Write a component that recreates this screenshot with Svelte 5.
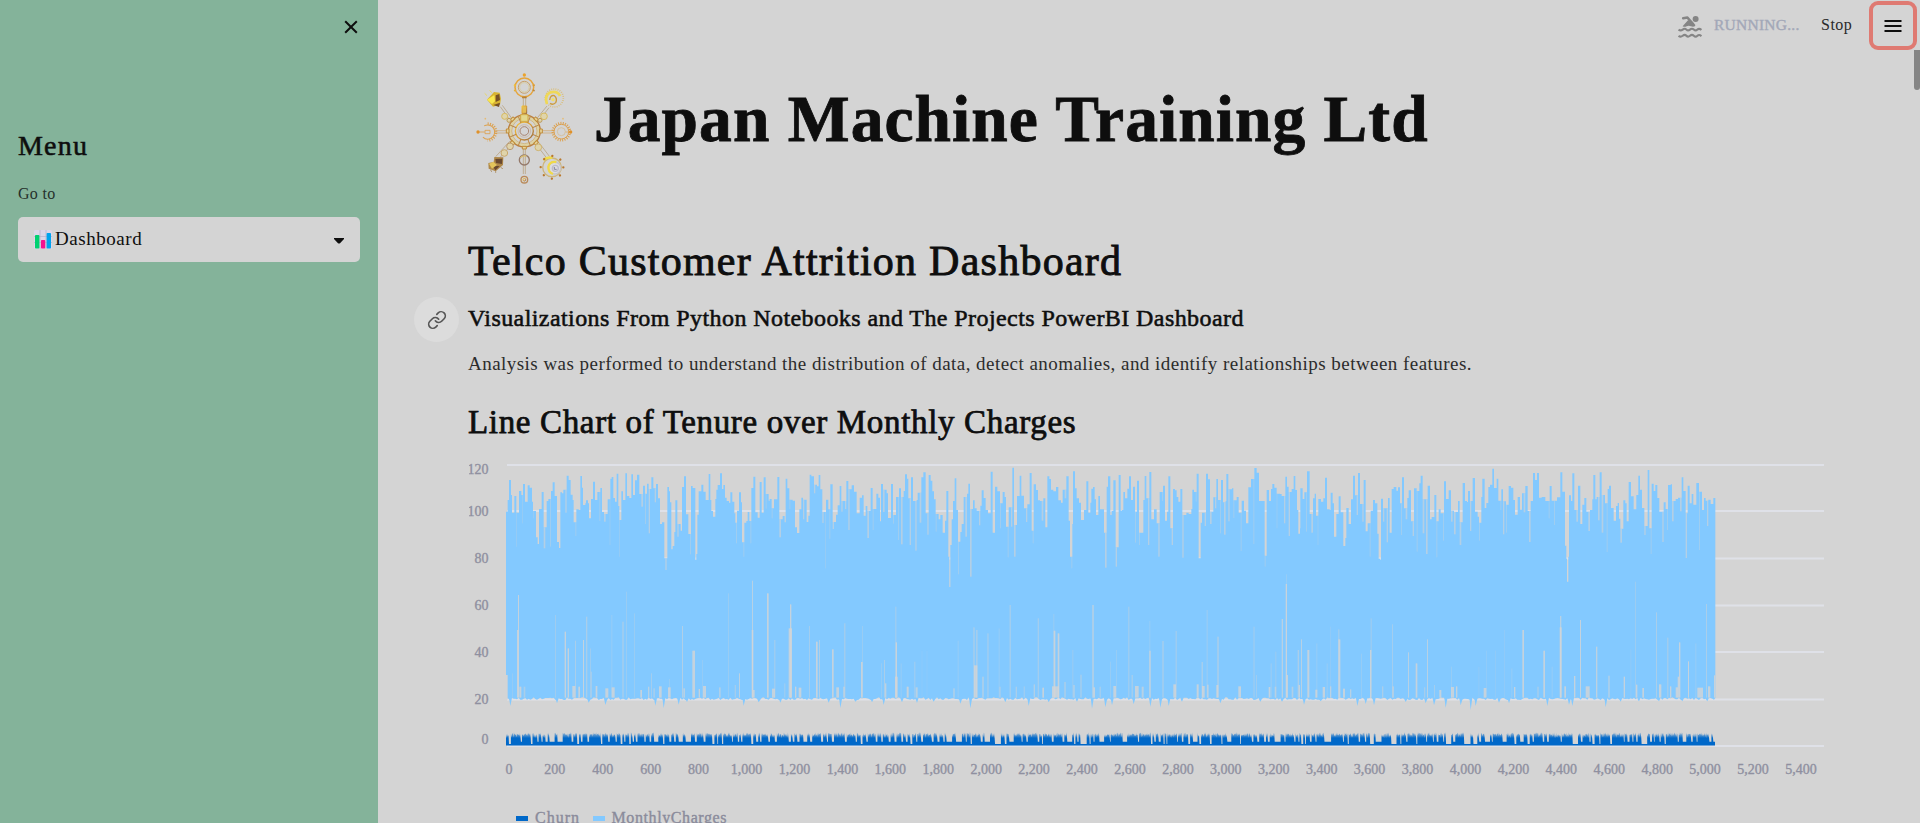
<script>
  // Chart geometry is kept in thirds of a pixel, one origin per panel.
  const panels = [
    {
      origin: 1380, end: 1260, start: 138,
      tops: '138,185 143,150 147,90 153,135 156,188 163,138 169,290 171,188 177,123 184,135 187,220 189,102 195,155 203,106 209,113 216,155 219,205 221,183 228,262 233,282 237,177 245,126 251,295 256,232 260,153 265,147 270,290 273,123 278,97 284,138 291,276 297,294 301,127 306,130 310,119 316,188 320,77 326,90 332,134 338,150 341,217 346,258 349,178 356,180 361,78 366,113 369,165 376,160 378,151 384,160 387,205 393,147 399,95 405,150 412,126 418,213 421,114 426,186 432,215 437,192 443,148 449,285 451,86 455,81 460,144 465,155 470,71 475,168 478,320 480,210 484,124 489,150 496,70 501,138 508,144 514,73 519,135 525,91 531,74 538,132 544,170 549,107 555,222 558,131 561,101 566,250 570,117 574,82 580,115 584,157 588,102 594,145 600,222 606,217 613,325 616,360 620,325 622,111 627,124 630,157 634,298 638,288 643,246 646,151 652,260 656,222 662,242 666,111 672,79 678,193 685,252 690,313 693,108 698,114 706,330 709,312 712,194 716,124 724,104 730,125 737,150 746,72 751,150 754,183 759,200 766,147 769,119 773,105 780,70 786,117 790,105 795,143 800,153 807,158 811,127 817,155 823,190 826,218 828,280 831,182 837,127 843,157 846,277 850,320 853,218 859,213 863,186 868,213 871,280 874,114 880,80 886,187 893,203 899,96 905,188 911,82 917,176 920,132 926,152 929,147 935,205 938,175 942,148 952,81 958,262 963,208 968,198 974,217 977,86 982,115 988,177 991,149 998,152 1005,232 1011,249 1018,178 1024,143 1029,208 1033,149 1040,216 1045,197 1049,74 1054,79 1062,130 1066,104 1071,109 1076,75 1081,118 1087,219 1091,186 1096,355 1098,149 1105,178 1108,266 1111,103 1118,237 1122,216 1128,194 1133,166 1139,108 1144,185 1148,153 1155,177 1159,93 1165,240 1169,118 1175,106 1182,125 1190,190 1194,190 1199,143 1206,136 1211,197 1217,168 1222,264 1227,182 1232,114 1238,240 1241,177 1249,131 1255,143',
      gaps: '171,540,4,1 174,435,3,1 157,670,2,.4 178,710,6,1 191,710,5,.6 285,495,3,.45 314,545,4,1 323,595,4,1 337,708,9,1 345,572,3,.6 355,710,5,1 369,570,3,1 378,500,4,.6 390,595,3,.4 392,665,4,.5 407,708,5,1 436,715,9,1 454,495,3,.3 455,712,9,1 487,515,4,.6 498,425,3,.35 522,490,3,.35 541,720,5,1 564,710,4,.8 573,670,3,.5 580,715,5,.5 597,709,8,1 624,712,8,1 627,687,3,.3 666,528,3,.7 670,715,5,.8 697,602,8,1 716,717,4,1 727,630,2,.4 729,708,9,1 804,430,3,.35 777,712,5,.7 824,705,4,.5 837,670,3,.9 876,392,3,.8 875,540,5,1 878,720,6,1 921,430,5,1 943,570,3,.6 936,716,9,1 973,700,3,.5 990,463,4,1 986,535,10,1 1005,710,4,1 1016,713,8,1 1047,528,3,.5 1068,575,5,1 1077,570,3,.7 1116,598,5,1 1129,712,8,1 1153,520,3,.7 1150,710,4,1 1203,636,5,1 1206,528,3,.35',
      drops: '152,768 290,760 388,758 435,765 586,767 610,775 655,764 682,756 849,767 895,757 960,758 1104,758 1143,774 1184,755 1238,757'
    },
    {
      origin: 2640, end: 1260, start: 0,
      tops: '0,214 3,102 9,186 14,119 20,130 24,204 33,102 39,221 42,195 48,141 54,270 57,115 63,283 68,141 71,123 75,73 81,86 85,145 89,285 93,82 99,153 106,302 110,150 113,128 119,218 124,82 130,67 137,190 142,254 146,75 152,92 157,124 162,148 167,245 170,192 176,208 181,195 188,248 195,212 199,123 205,320 208,411 211,285 215,208 219,153 224,85 229,180 234,373 237,275 241,246 245,222 251,141 256,260 261,131 265,101 270,380 275,177 279,151 284,175 290,182 297,226 301,167 305,121 311,144 317,180 324,190 332,65 338,248 345,110 352,124 360,235 363,160 368,126 374,141 378,230 383,322 386,172 393,230 397,53 402,320 407,225 411,138 419,77 424,137 432,175 438,216 442,163 449,69 455,242 458,280 461,103 468,120 474,151 480,153 485,212 490,145 496,232 502,79 508,87 513,119 520,124 528,111 535,151 543,158 548,119 554,145 559,79 566,212 570,320 574,355 577,222 579,64 585,115 590,145 597,158 603,210 612,180 619,94 625,188 631,158 634,116 639,111 644,148 648,195 655,138 660,178 672,248 675,353 680,110 684,79 691,195 695,183 700,91 707,350 711,292 716,75 722,182 726,180 730,126 735,145 742,116 747,79 753,150 759,110 765,278 768,185 771,92 777,285 780,248 790,150 794,78 799,145 804,285 808,66 814,208 822,178 830,220 835,320 839,126 846,153 849,107 855,212 861,185 865,79 871,235 875,285 879,117 885,121 890,141 895,155 901,117 907,323 911,195 919,188 926,192 934,177 937,119 942,126 947,155 950,71 956,325 962,218 966,188 974,228 978,71 984,88 990,222 995,185 1000,142 1005,175 1009,87 1014,150 1020,250 1023,90 1029,157 1032,254 1037,153 1039,72 1045,214 1049,118 1056,115 1060,204 1063,151 1070,141 1076,188 1082,303 1085,152 1092,182 1098,220 1105,112 1113,87 1120,282 1123,54 1130,68 1137,153 1154,350 1157,317 1160,120 1167,153 1173,117 1177,102 1183,113 1190,235 1192,131 1200,132 1205,138 1212,220 1216,80 1221,110 1226,258 1230,126 1235,117 1241,78 1246,120 1251,180 1255,251',
      gaps: '3,640,3,.3 12,630,3,.6 15,700,4,.9 46,470,3,.55 47,577,4,1 45,680,8,1 62,640,3,.3 80,710,6,1 103,635,3,.5 107,712,6,.8 125,602,2,.2 140,602,2,.2 220,715,4,.8 233,572,3,.3 280,532,4,.6 288,540,5,.5 282,646,10,1 307,680,4,.8 322,550,4,.5 356,535,3,.3 358,710,4,.6 389,465,3,.7 407,710,4,.6 431,709,4,.4 461,703,4,.7 473,505,4,.5 487,713,5,1 520,492,3,.35 521,542,5,1 516,709,21,1 533,550,5,1 553,696,4,.7 577,600,3,.4 580,705,4,.8 601,674,4,.6 637,465,4,.9 640,712,5,1 659,710,3,.7 690,635,3,.3 700,708,8,1 708,600,3,.3 745,470,3,.6 755,675,3,.7 765,708,11,1 785,710,6,.8 808,513,3,.3 808,602,4,1 847,573,4,.6 887,543,3,.6 880,703,8,1 950,703,6,1 965,636,3,.8 966,708,8,1 980,480,3,.4 981,704,5,.8 1012,560,4,.7 1009,705,6,1 1075,709,8,1 1120,530,4,.4 1128,675,3,.4 1172,640,3,.4 1166,711,5,1 1186,605,3,.4 1184,710,5,.7 1205,507,4,.8 1218,373,3,.3 1217,402,4,1 1219,675,5,1 1235,710,5,.7 1253,600,4,.6 1256,705,4,1',
      drops: '12,765 66,757 110,759 160,755 243,761 271,775 376,757 448,768 506,757 590,755 636,776 676,772 696,766 759,763 813,770 839,773 864,768 906,755 1020,760 1140,755 1206,755'
    },
    {
      origin: 3900, end: 1246, start: 0,
      tops: '0,235 1,115 8,147 13,127 18,245 21,64 29,192 34,248 39,145 44,131 48,197 53,285 55,147 63,155 70,145 75,83 81,178 89,180 92,128 98,160 102,260 109,192 116,139 122,187 130,288 136,264 139,174 146,222 153,148 159,77 165,136 170,195 174,69 180,162 187,215 191,90 197,244 203,220 209,320 212,182 219,150 225,160 232,251 236,326 241,330 243,146 249,215 253,175 260,277 264,144 269,248 275,117 281,111 289,122 294,112 300,160 303,255 306,82 312,175 317,208 322,144 326,121 333,214 338,258 342,115 350,305 353,123 358,100 362,77 368,250 373,148 378,312 383,107 390,208 395,201 403,135 409,322 412,214 416,178 422,190 429,272 432,94 438,147 446,121 453,215 458,182 462,253 467,186 474,153 479,285 484,217 488,99 495,153 501,156 504,123 510,243 514,153 518,84 525,185 533,200 537,272 540,218 544,141 547,86 554,174 559,159 565,111 570,104 577,56 582,114 590,86 595,152 601,180 604,118 609,253 613,154 618,248 621,164 626,108 633,113 640,150 645,194 653,141 660,179 666,130 671,187 676,108 683,183 687,276 692,153 699,69 705,90 711,69 717,143 725,141 736,153 746,205 749,108 755,152 762,225 765,152 771,142 781,67 787,125 795,287 799,326 801,395 805,320 807,136 813,153 817,70 823,180 829,215 834,107 841,222 847,164 853,144 859,185 865,243 870,180 877,148 880,75 886,148 890,141 894,211 899,67 905,248 910,135 915,160 920,306 923,117 927,107 933,174 941,212 948,168 953,159 957,206 961,278 966,236 970,151 976,160 980,214 986,96 993,139 1001,178 1009,135 1015,77 1020,119 1026,174 1033,255 1037,228 1043,60 1048,235 1052,312 1055,101 1061,123 1066,105 1072,144 1078,185 1087,276 1091,157 1097,177 1101,240 1104,105 1112,103 1116,214 1121,153 1127,147 1134,143 1140,184 1145,82 1150,123 1157,324 1161,190 1163,107 1169,160 1175,132 1180,164 1189,99 1197,300 1200,125 1206,180 1212,144 1217,152 1221,228 1225,149 1232,162 1240,144',
      gaps: '3,568,3,.8 22,600,6,1 49,580,3,.3 46,719,6,1 68,711,7,1 80,640,3,.3 90,530,3,.2 90,709,4,.8 115,538,3,.6 115,568,6,1 129,716,6,1 150,718,4,.8 183,611,3,.3 212,505,3,.5 210,600,4,1 246,709,4,.6 276,523,3,.5 277,709,5,.7 324,607,3,.8 347,640,5,1 372,712,4,.5 381,568,3,.8 402,705,3,.5 418,720,6,1 453,650,3,.3 453,711,9,1 468,709,4,1 535,650,3,.2 551,714,8,1 559,602,2,.3 585,602,2,.3 612,540,3,.2 634,655,3,.3 642,711,4,1 667,540,5,1 712,710,4,.6 730,602,5,1 755,650,3,.3 780,498,4,.8 779,532,6,1 793,709,5,1 822,678,4,1 840,510,3,1 888,590,4,.9 857,709,12,1 925,677,4,.8 971,680,4,1 991,598,3,.2 1006,395,2,.6 1008,704,4,1 1027,714,5,1 1068,487,3,.6 1077,703,7,1 1102,563,3,.7 1110,709,4,1 1137,577,4,1 1133,680,5,1 1127,712,7,1 1164,634,3,1 1186,580,3,.3 1192,713,17,1 1218,462,3,.6 1224,709,7,1 1242,676,4,1',
      drops: '12,764 62,754 172,768 198,762 223,766 319,756 378,760 403,766 438,773 484,766 510,780 528,768 599,758 628,760 744,768 805,764 817,768 917,772 963,755 1019,754 1078,754 1145,754 1224,754'
    }
  ];

  const rows = (s) => s.split(' ').map((t) => t.split(',').map(Number));

  let seed = 71;
  const rnd = () => ((seed = (seed * 16807) % 2147483647) / 2147483647);

  const areas = panels.map((p) => {
    const tops = rows(p.tops);
    const notches = [];
    let d = `M${p.start} 748`;
    tops.forEach(([x, y], i) => {
      const nx = i < tops.length - 1 ? tops[i + 1][0] : p.end;
      let ty = y;
      // Hairline valleys are drawn as faint notches instead of full cuts.
      if (i > 0 && i < tops.length - 1 && nx - x <= 5) {
        const rim = Math.max(tops[i - 1][1], tops[i + 1][1]);
        if (y > rim + 20 && y < 390) {
          ty = rim;
          notches.push([x, rim, nx - x, y - rim, nx - x <= 3 ? 0.35 : 0.6]);
        }
      }
      d += `L${x} ${ty}L${nx} ${ty}`;
    });
    d += `L${p.end} 744`;
    const drops = rows(p.drops);
    for (let x = p.end - 4; x > p.start; x -= 5) {
      const drop = drops.find((q) => Math.abs(q[0] - x) <= 2.5);
      d += `L${x} ${drop ? drop[1] : Math.round(742 + rnd() * 8)}`;
      if (drop) d += `L${x - 3} 750`;
    }
    return { origin: p.origin, d: d + 'Z', gaps: rows(p.gaps), notches };
  });

  // Churn flips between 0 and 1, so it reads as a dense comb with short lulls.
  let comb = 'M506 745.5';
  let x = 506;
  while (x < 1714) {
    const w = rnd() < 0.3 ? 4 + rnd() * 8 : 1.2 + rnd() * 3;
    for (let k = 0; k < w && x < 1714; k += 1, x += 1) {
      comb += `L${x} ${(732 + rnd() * 3).toFixed(1)}L${x + 0.6} ${(733 + rnd() * 5).toFixed(1)}`;
    }
    const g = rnd() < 0.17 ? 3 + rnd() * 4 : 0.6 + rnd() * 1.5;
    const floor = rnd() < 0.25 ? 744 : 741.8;
    const end = Math.min(x + g, 1715);
    comb += `L${x} ${floor}L${end.toFixed(1)} ${floor}`;
    x = end;
  }
  comb += 'L1715 745.5Z';

  const grid = [465, 511, 558.5, 605.5, 652, 699.5, 746];
  const yTicks = [[120, 474], [100, 516], [80, 563], [60, 609.5], [40, 656.5], [20, 703.5], [0, 743.5]];
  const xTicks = Array.from({ length: 28 }, (_, i) => ({
    label: (i * 200).toLocaleString('en-US'),
    x: i === 0 ? 509 : 554.8 + (i - 1) * 47.93
  }));

  const spokes = [0, 45, 90, 135, 180, 225, 270, 315];
</script>

<div class="app">
  <aside>
    <div class="close">
      <svg width="14" height="14" viewBox="0 0 14 14"><path d="M1.2 1.2 12.8 12.8M12.8 1.2 1.2 12.8" /></svg>
    </div>
    <h3 class="menu">Menu</h3>
    <div class="goto">Go to</div>
    <div class="select">
      <svg class="bars" width="18" height="19" viewBox="0 0 18 19">
        <rect width="18" height="19" rx="1.5" fill="#ddd6e8" />
        <path d="M0 6.5H18M0 12.5H18M6 0V19M12 0V19" stroke="#bcb4cd" stroke-width=".8" />
        <rect x="1" y="5" width="4.4" height="13.5" rx=".8" fill="#00d070" />
        <rect x="7" y="10" width="4.2" height="8.5" rx=".8" fill="#f5128f" />
        <rect x="12.6" y="3" width="4.4" height="15.5" rx=".8" fill="#00a3ee" />
      </svg>
      <span class="value">Dashboard</span>
      <svg class="caret" width="10" height="6" viewBox="0 0 10 6"><path d="M0 0H10V1L6 5.2Q5 6 4 5.2L0 1Z" /></svg>
    </div>
  </aside>

  <main>
    <header>
      <svg class="swim" width="24" height="24" viewBox="0 0 24 24">
        <circle cx="17.6" cy="3.9" r="3" fill="#858585" />
        <path d="M5.2 3.3 9.4 2.5 15 9.2" fill="none" stroke="#858585" stroke-width="2.6" stroke-linecap="round" stroke-linejoin="round" />
        <path d="M10 5.2 4.6 11.2Q6.6 12.2 8.6 11.2 10.8 10.2 13 11.3 15.4 12.3 17.2 11V9.8L13.6 6Z" fill="#858585" />
        <path d="M.6 14.6Q2.6 16.3 4.7 14.6T8.4 14.6 12 14.6 15.8 14.6 19.4 14.6 23.4 14.9M.6 20.8Q2.6 22.5 4.7 20.8T8.4 20.8 12 20.8 15.8 20.8 19.4 20.8 23.4 21.1" fill="none" stroke="#858585" stroke-width="2.1" />
      </svg>
      <span class="running">RUNNING...</span>
      <span class="stop">Stop</span>
      <div class="burger">
        <svg width="18" height="12" viewBox="0 0 18 12"><path d="M.5 1H17.5M.5 6H17.5M.5 11H17.5" /></svg>
      </div>
      <div class="thumb"></div>
    </header>

    <section class="content">
      <div class="brand">
        <svg class="logo" width="112" height="118" viewBox="40 30 336 354">
          <defs>
            <linearGradient id="gold" x1="0" y1="0" x2="1" y2="1">
              <stop offset="0" stop-color="#f2c53d" />
              <stop offset=".5" stop-color="#d99b35" />
              <stop offset="1" stop-color="#94683f" />
            </linearGradient>
          </defs>
          <g fill="none" stroke="url(#gold)" stroke-width="4">
            <!-- arms -->
            <path d="M191 165V112M198 165V112M191 260V342M197 260V342M151 181 122 140M157 176 128 136M231 176 262 138M238 182 268 143M150 244 108 290M158 252 116 298M230 254 264 298M238 248 270 290" stroke-width="2" stroke="#b39a70" />
            <path d="M142 212H106M142 219H106M248 212H284M248 219H284" stroke-width="2" stroke="#cfa468" />
            <!-- hub -->
            <circle cx="194" cy="213" r="43" stroke="#ded3a4" stroke-width="8" />
            <circle cx="194" cy="213" r="48" stroke-width="4" stroke="#bb8040" />
            <circle cx="194" cy="213" r="38" stroke="#d0a95c" stroke-width="2" />
            <circle cx="194" cy="213" r="27" stroke-width="4" />
            <circle cx="194" cy="213" r="19" stroke="#cbbcae" stroke-width="3" />
            <circle cx="194" cy="213" r="13" stroke="#a88572" stroke-width="3" />
            {#each spokes as a}
              <path d="M194 167V187" transform="rotate({a + 22.5} 194 213)" stroke="#b98545" stroke-width="3" />
              <path d="M188 159H200V167H188Z" transform="rotate({a} 194 213)" stroke="#bf8c3a" fill="#e7d49a" stroke-width="3" />
            {/each}
            <path d="M187 138H201V160H187Z" fill="#e3bd54" stroke-width="3" />
            <path d="M183 164H205V184H183Z" fill="#e3d98e" stroke="#d0a643" stroke-width="3" />
            <!-- top ring -->
            <circle cx="194" cy="82" r="28" stroke-width="4.5" stroke="#e5a43b" />
            <circle cx="194" cy="82" r="18" stroke="#c9a06b" stroke-width="3" />
            <circle cx="194" cy="82" r="14" stroke="#d9ca8d" stroke-width="2" />
            <circle cx="194" cy="45" r="5" fill="#eaa32d" stroke="none" />
            <path d="M163 74 168 77M225 74 220 77M163 92 169 90M225 92 219 90M187 112H201" stroke-width="5" />
            <!-- toothed rings -->
            <g stroke="#dca04d">
              <path d="M84 191A25 25 0 0 1 84 241" stroke-dasharray="3 4" stroke-width="8" />
              <circle cx="84" cy="216" r="21" stroke-width="3" stroke-dasharray="92 40" transform="rotate(-120 84 216)" />
              <path d="M76 211H91V221H76ZM58 216H75" stroke-width="2.5" />
              <circle cx="305" cy="215" r="26" stroke-dasharray="3 4" stroke-width="7" />
              <circle cx="305" cy="215" r="22" stroke-width="3" />
              <circle cx="305" cy="215" r="12" stroke="#d5bd94" stroke-width="2.5" />
              <path d="M318 216H332" stroke-width="2" />
            </g>
            <circle cx="55" cy="216" r="5" fill="#df912a" stroke="none" />
            <circle cx="333" cy="216" r="5" fill="#df912a" stroke="none" />
            <circle cx="284" cy="114" r="27" stroke-dasharray="2.5 4" stroke-width="5" stroke="#d9bd78" />
            <path d="M262 132Q253 105 273 97 294 92 301 108" stroke="#efd858" stroke-width="8" />
            <path d="M270 120Q272 104 284 107 294 115 288 128 281 136 271 130" stroke="#cd9c3c" stroke-width="4" />
            <circle cx="280" cy="119" r="5" fill="#f1df68" stroke="none" />
            <!-- lower ring -->
            <circle cx="194" cy="300" r="15" stroke="#94796a" stroke-width="4" />
            <path d="M182 294Q188 285 200 288" stroke="#d9bd73" stroke-width="4" />
            <circle cx="194" cy="359" r="10" stroke="#b98a5a" stroke-width="4" />
            <circle cx="194" cy="359" r="4" stroke-width="3" />
            <path d="M194 371V378" />
            <circle cx="277" cy="322" r="28" stroke="#cdb67c" stroke-width="4" />
            <path d="M251 300Q264 289 278 294" stroke="#f0dc48" stroke-width="7" />
            <circle cx="285" cy="324" r="18" fill="#dcdbe0" stroke="#c5c4cb" stroke-width="4" />
            <path d="M290 306Q270 303 266 320 265 337 280 342" stroke="#f0d948" stroke-width="7" />
            <circle cx="287" cy="325" r="9" stroke="#bdbcc8" stroke-width="4" />
            <path d="M284 321V328H291" stroke="#85859b" stroke-width="3" />
            <circle cx="277" cy="322" r="34" stroke="#b9782e" stroke-width="7" stroke-linecap="round" stroke-dasharray=".1 26.6" />
            <!-- joints -->
            <g fill="#dfd4ab" stroke-width="3">
              <circle cx="135" cy="169" r="9" stroke="#d8bb5e" /><circle cx="148" cy="181" r="6" stroke="#bc9959" />
              <circle cx="253" cy="169" r="10" stroke="#d8bb5e" /><circle cx="241" cy="181" r="6" stroke="#bc9959" />
              <circle cx="151" cy="259" r="10" stroke="#b99970" /><circle cx="134" cy="279" r="10" stroke="#c9a96d" />
              <circle cx="236" cy="262" r="10" stroke="#cfb470" />
            </g>
          </g>
          <path d="M82 119 103 96 120 98 124 116 121 134 100 140Z" fill="#d8b331" />
          <path d="M82 119 104 105 106 124 97 132Z" fill="#f8e84f" />
          <path d="M108 106 119 102 121 120 108 126ZM101 135 121 128 118 141Z" fill="#765026" />
          <path d="M75 100 82 107M90 91 96 98" stroke="#e8d766" stroke-width="3" />
          <path d="M104 291 131 292 130 315 108 334 87 326 86 309 102 306Z" fill="#ae8748" />
          <path d="M107 297 128 296 127 312 109 309ZM98 316 120 319 107 331Z" fill="#69492f" />
          <path d="M88 311 101 305 112 315 97 326Z" fill="#e3c55b" />
          <path d="M92 330 97 335M124 322 129 327M108 334V338" stroke="#a48150" stroke-width="3" />
          <circle cx="77" cy="176" r="2.5" fill="#e5bb73" /><circle cx="310" cy="176" r="2.5" fill="#e5bb73" />
        </svg>
        <h1>Japan Machine Training Ltd</h1>
      </div>

      <h2>Telco Customer Attrition Dashboard</h2>
      <div class="sub">
        <span class="anchor">
          <svg width="20" height="20" viewBox="0 0 24 24"><path d="M10 13a5 5 0 0 0 7.54.54l3-3a5 5 0 0 0-7.07-7.07l-1.72 1.71M14 11a5 5 0 0 0-7.54-.54l-3 3a5 5 0 0 0 7.07 7.07l1.71-1.71" /></svg>
        </span>
        <h3>Visualizations From Python Notebooks and The Projects PowerBI Dashboard</h3>
      </div>
      <p>Analysis was performed to understand the distribution of data, detect anomalies, and identify relationships between features.</p>
      <h4>Line Chart of Tenure over Monthly Charges</h4>

      <svg class="chart" width="1371" height="373" viewBox="469 450 1371 373">
        <defs>
          <linearGradient id="comb" gradientUnits="userSpaceOnUse" x1="0" y1="732" x2="0" y2="738">
            <stop offset="0" stop-color="#0068c9" stop-opacity=".15" />
            <stop offset="1" stop-color="#0068c9" />
          </linearGradient>
        </defs>
        {#each grid as y}
          <path d="M507 {y}H1824" stroke="#dfe1e8" stroke-width="2" />
        {/each}
        <g transform="scale(.333333)">
          {#each areas as a}
            <g transform="translate({a.origin} 1350)">
              <path d={a.d} fill="#83c9ff" />
              {#each a.notches as [nx, ny, nw, nh, no]}
                <rect x={nx} y={ny} width={nw} height={nh} fill="#d4d4d4" opacity={no} />
              {/each}
              {#each a.gaps as [gx, gy, gw, go]}
                <rect x={gx} y={gy} width={gw} height={743 - gy} fill="#d4d4d4" opacity={go * 0.8} />
              {/each}
            </g>
          {/each}
          <rect x="1518" y="2025" width="5" height="74" fill="#d4d4d4" />
        </g>
        <path d={comb} fill="url(#comb)" />
        <g class="tick">
          {#each yTicks as [v, y]}
            <text x="488.5" y={y} text-anchor="end">{v}</text>
          {/each}
          {#each xTicks as t}
            <text x={t.x} y="774" text-anchor="middle">{t.label}</text>
          {/each}
        </g>
        <rect x="516" y="816" width="12" height="5" fill="#0068c9" />
        <rect x="593" y="816" width="12" height="5" fill="#83c9ff" />
        <g class="legend">
          <text x="535" y="823" textLength="44">Churn</text>
          <text x="611.5" y="823" textLength="115">MonthlyCharges</text>
        </g>
      </svg>
    </section>
  </main>
</div>

<style>
  :global(body) { margin: 0; overflow: hidden; background: #d4d4d4; }
  .app { display: flex; width: 1920px; height: 823px; overflow: hidden; font-family: 'Liberation Serif', serif; color: #0e0e0e; background: #d4d4d4; }
  h1, h2, h3, h4, p { margin: 0; white-space: nowrap; }
  h2, h3, h4 { font-weight: 400; -webkit-text-stroke: 0.55px #0e0e0e; }

  aside { box-sizing: border-box; width: 378px; flex: none; padding: 20px 18px 0; background: #84b39a; }
  .close { display: flex; justify-content: flex-end; padding-right: 2px; height: 14px; }
  .close svg { fill: none; stroke: #0e0e0e; stroke-width: 2; }
  .menu { margin-top: 95px; font-size: 28px; line-height: 34px; letter-spacing: 1.2px; }
  .goto { margin-top: 21px; font-size: 16px; line-height: 20px; letter-spacing: 0.3px; color: #26302b; }
  .select { display: flex; align-items: center; box-sizing: border-box; height: 45px; margin-top: 13px; padding: 0 16px; border-radius: 5px; background: #d4d4d4; }
  .value { margin: -2px 0 0 3px; flex: 1; font-size: 19px; letter-spacing: 0.55px; }
  .caret { fill: #0e0e0e; margin-top: 2px; }

  main { flex: 1; min-width: 0; }
  header { display: flex; align-items: center; justify-content: flex-end; height: 50px; position: relative; }
  .swim { margin-top: 3px; }
  .running { margin-left: 12px; width: 85px; font-size: 15.5px; letter-spacing: 0.25px; color: #a3a8b8; -webkit-text-stroke: 0.4px #a3a8b8; }
  .stop { margin-left: 22px; width: 31px; font-size: 16px; letter-spacing: 0.5px; color: #2a2a2a; }
  .burger { display: flex; align-items: center; justify-content: center; box-sizing: border-box; width: 48px; height: 49px; margin: 1px 3px 0 17px; border: 4px solid #df7a72; border-radius: 9px; }
  .burger path { stroke: #0e0e0e; stroke-width: 2; }
  .thumb { position: absolute; right: 0; top: 50px; width: 6px; height: 40px; border-radius: 0 0 3px 3px; background: #858585; }

  .content { padding-left: 91px; }
  .brand { display: flex; height: 150px; }
  .logo { margin: 20px 0 0 4px; }
  h1 { margin: 37px 0 0 9px; font-size: 65.5px; line-height: 64px; font-weight: 700; letter-spacing: 1.05px; -webkit-text-stroke: 0.8px #0e0e0e; }
  h2 { margin: 37px 0 0 -1px; font-size: 42px; line-height: 48px; letter-spacing: 1.25px; -webkit-text-stroke-width: 0.9px; }
  .sub { display: flex; align-items: center; height: 30px; margin: 18px 0 0 -55px; }
  .sub h3 { font-size: 24px; line-height: 30px; letter-spacing: 0.42px; }
  .anchor { display: flex; align-items: center; justify-content: center; width: 45px; height: 45px; margin: 3px 9px 0 0; border-radius: 50%; background: #dcdcdc; }
  .anchor path { fill: none; stroke: #555; stroke-width: 2; stroke-linecap: round; stroke-linejoin: round; }
  p { margin: 17px 0 0 -1px; font-size: 19px; line-height: 28px; letter-spacing: 0.46px; color: #2c2c2c; }
  h4 { margin: 24px 0 0 -1px; font-size: 33px; line-height: 40px; letter-spacing: 0.66px; -webkit-text-stroke-width: 0.75px; }
  .chart { display: block; margin-top: 8px; }
  .tick { font-size: 14px; fill: #8f90a0; stroke: #8f90a0; stroke-width: 0.35px; }
  .legend { font-size: 16px; fill: #8a8b9b; stroke: #8a8b9b; stroke-width: 0.35px; }
</style>
